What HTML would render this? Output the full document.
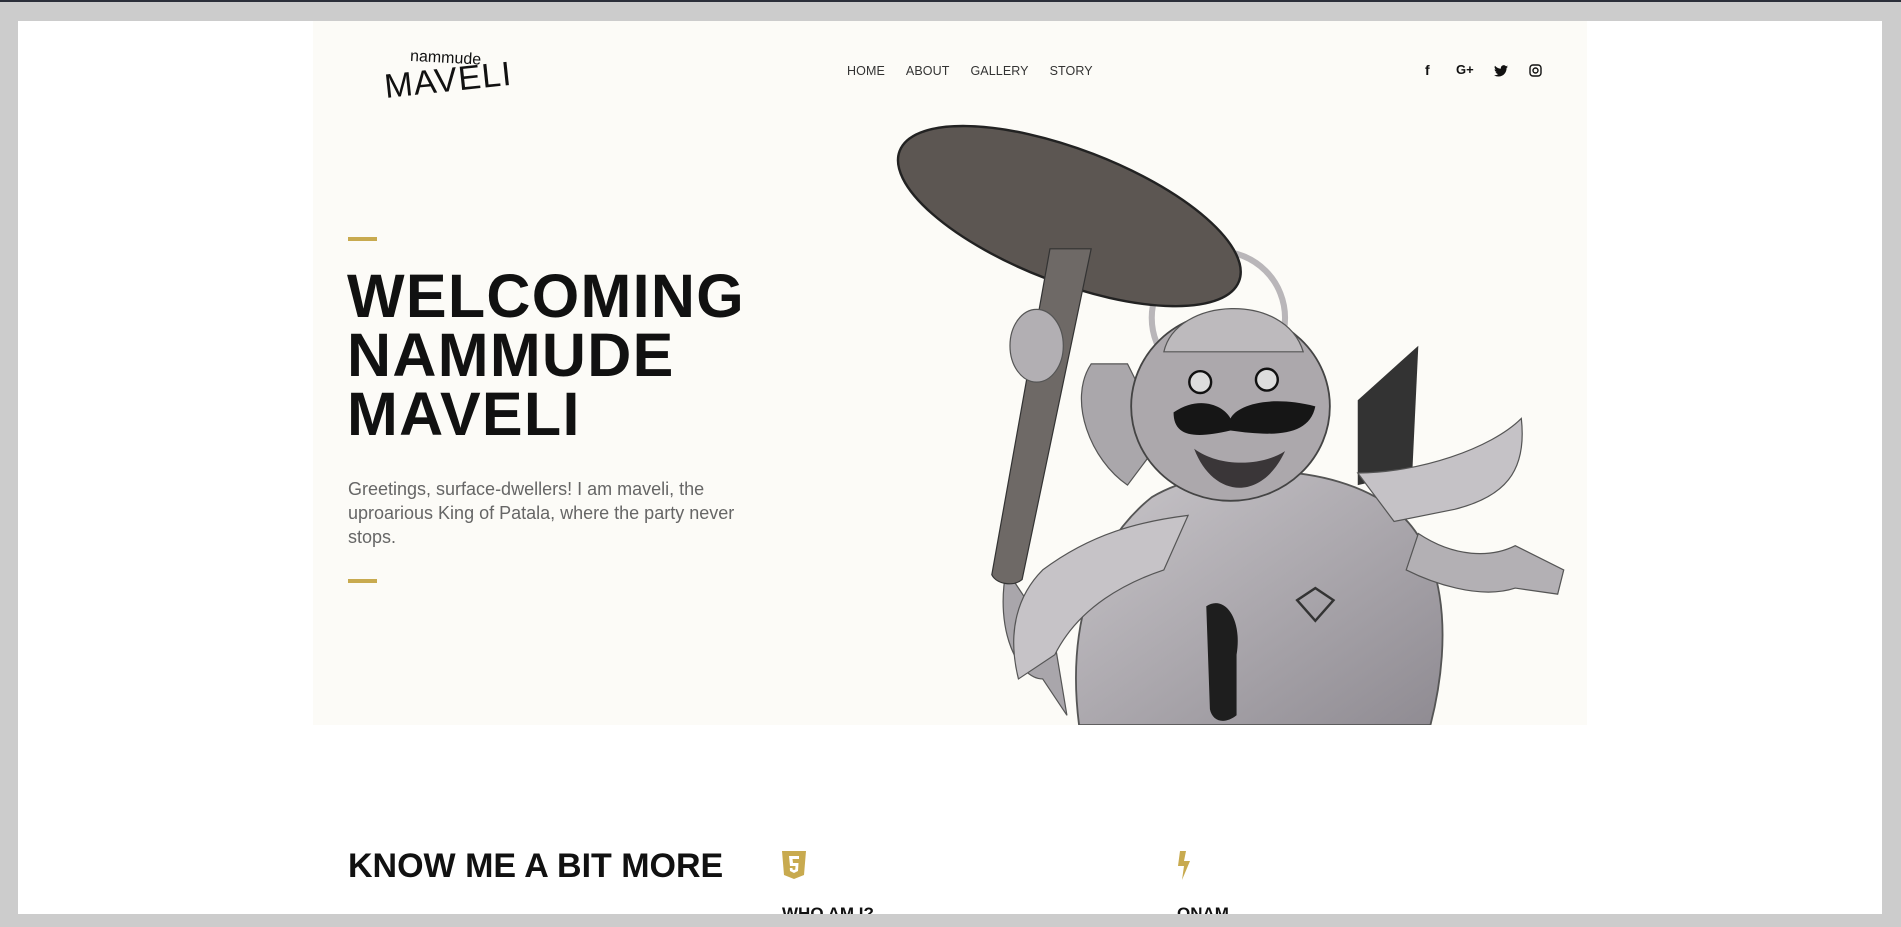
<!DOCTYPE html>
<html><head><meta charset="utf-8"><style>
*{margin:0;padding:0;box-sizing:border-box}
html,body{width:1901px;height:927px;overflow:hidden;background:#cccccc;font-family:"Liberation Sans",sans-serif}
.topline{position:absolute;left:0;top:0;width:1901px;height:2px;background:#2b2f3a}
.white{position:absolute;left:18px;top:21px;width:1864px;height:893px;background:#fff}
.hero{position:absolute;left:313px;top:21px;width:1274px;height:704px;background:#fcfbf7}
.logo{position:absolute;left:382px;top:46px}
.nav{position:absolute;top:64px;left:847px;font-size:12.5px;color:#333;letter-spacing:.1px}
.nav span{margin-right:21px}
.soc{position:absolute;top:62px;font-size:14px;color:#111;font-weight:bold}
.bar{position:absolute;left:348px;width:29px;height:4px;background:#c8aa4f}
h1{position:absolute;left:347px;top:267px;font-size:61px;line-height:59px;font-weight:bold;color:#111;letter-spacing:1.3px}
.p{position:absolute;left:348px;top:477px;width:400px;font-size:18px;line-height:24px;color:#666}
h2{position:absolute;left:348px;top:847px;font-size:34px;font-weight:bold;color:#111;letter-spacing:0}
h3{position:absolute;top:904px;font-size:17px;font-weight:bold;color:#111}
</style></head><body>
<div class="topline"></div>
<div class="white"></div>
<div class="hero"></div>
<svg class="logo" width="130" height="56" viewBox="0 0 130 56">
<text x="28" y="16" font-family="Liberation Sans" font-size="16" fill="#111" transform="rotate(3 50 12)">nammude</text>
<text x="2" y="46" font-family="Liberation Sans" font-size="34" fill="#111" transform="rotate(-6 60 34)" letter-spacing="1">MAVELI</text>
</svg>
<div class="nav"><span>HOME</span><span>ABOUT</span><span>GALLERY</span><span>STORY</span></div>
<div class="soc" style="left:1425px">f</div>
<div class="soc" style="left:1456px;font-size:13px">G+</div>
<svg style="position:absolute;left:1494px;top:65px" width="14" height="12" viewBox="0 0 24 20"><path d="M24 2.4c-.9.4-1.8.7-2.8.8 1-.6 1.8-1.6 2.2-2.7-1 .6-2 1-3.1 1.2A4.9 4.9 0 0 0 11.9 6 14 14 0 0 1 1.7.9a4.9 4.9 0 0 0 1.5 6.6c-.8 0-1.6-.3-2.2-.6 0 2.4 1.700 4.4 3.9 4.8-.7.2-1.5.2-2.2.1.6 2 2.4 3.4 4.6 3.4A9.9 9.9 0 0 1 0 17.3 14 14 0 0 0 7.5 19.5c9.1 0 14-7.5 14-14v-.6c1-.7 1.8-1.6 2.5-2.5z" fill="#111"/></svg>
<svg style="position:absolute;left:1529px;top:64px" width="13" height="13" viewBox="0 0 13 13"><rect x="1" y="1" width="11" height="11" rx="3" fill="none" stroke="#111" stroke-width="1.4"/><circle cx="6.5" cy="6.5" r="2.5" fill="none" stroke="#111" stroke-width="1.4"/></svg>

<svg style="position:absolute;left:313px;top:21px" width="1274" height="704" viewBox="258 17 1051 581">
<defs>
<linearGradient id="b" x1="0" y1="0" x2="1" y2="1"><stop offset="0" stop-color="#c9c6ca"/><stop offset="1" stop-color="#8f8b92"/></linearGradient>
</defs>
<path d="M1120 330 L1170 285 L1165 390 L1120 400Z" fill="#333"/>
<path d="M830 470 C820 520 840 560 860 560 L880 590 L870 530 Z" fill="#a9a6ab" stroke="#555"/>
<path d="M900 300 C880 330 900 380 930 400 L960 360 L930 300Z" fill="#aaa7ab" stroke="#555"/>
<path d="M890 598 C880 520 900 450 950 410 C1000 380 1100 380 1150 420 C1190 450 1200 520 1180 598Z" fill="url(#b)" stroke="#555" stroke-width="1.5"/>
<path d="M1120 390 C1170 390 1230 370 1255 345 C1260 390 1240 410 1200 420 L1150 430Z" fill="#c5c2c6" stroke="#555"/>
<path d="M1170 440 C1200 460 1230 460 1250 450 L1290 470 L1285 490 L1250 485 C1220 495 1180 480 1160 470Z" fill="#b3b0b4" stroke="#555"/>
<path d="M860 470 C900 440 940 430 980 425 L960 470 C930 480 890 500 870 540 L840 560 C830 520 840 490 860 470Z" fill="#c6c3c7" stroke="#555"/>
<circle cx="1005" cy="262" r="55" fill="none" stroke="#b9b6b9" stroke-width="5"/>
<ellipse cx="1015" cy="335" rx="82" ry="78" fill="#aca8ac" stroke="#444" stroke-width="1.5"/>
<path d="M960 290 C970 245 1060 240 1075 290Z" fill="#bdbabd" stroke="#555"/>
<path d="M968 340 C990 325 1010 335 1015 345 C1020 335 1045 325 1085 335 C1080 360 1050 360 1015 355 C985 362 968 360 968 340Z" fill="#161616"/>
<path d="M985 370 C1000 410 1040 415 1060 372 C1040 385 1005 385 985 370Z" fill="#3a3638"/>
<circle cx="990" cy="315" r="9" fill="#ddd" stroke="#111" stroke-width="2"/>
<circle cx="1045" cy="313" r="9" fill="#ddd" stroke="#111" stroke-width="2"/>
<ellipse cx="882" cy="178" rx="150" ry="55" transform="rotate(21 882 178)" fill="#5c5652" stroke="#222" stroke-width="2"/>
<path d="M866 205 L900 205 L843 478 C836 484 822 482 818 474Z" fill="#6e6966" stroke="#333"/>
<ellipse cx="855" cy="285" rx="22" ry="30" fill="#b2afb3" stroke="#555"/>
<path d="M995 500 C1010 490 1025 510 1020 540 L1020 590 C1010 598 1000 595 998 585Z" fill="#1e1e1e"/>
<path d="M1070 495 L1085 485 L1100 495 L1085 512Z" fill="none" stroke="#333" stroke-width="2"/>
</svg>

<div class="bar" style="top:237px"></div>
<h1>WELCOMING<br>NAMMUDE<br>MAVELI</h1>
<div class="p">Greetings, surface-dwellers! I am maveli, the uproarious King of Patala, where the party never stops.</div>
<div class="bar" style="top:579px"></div>

<h2>KNOW ME A BIT MORE</h2>
<svg style="position:absolute;left:782px;top:851px" width="24" height="28" viewBox="0 0 24 28"><path d="M0 0H24L22 24L12 28L2 24Z" fill="#c8aa4f"/><path d="M7 5H17V8H10.5L11 12H16.5L16 20L12 22L8 20L7.8 17H10.5L10.6 18.5L12 19L13.3 18.5L13.5 15H8Z" fill="#fff"/></svg>
<svg style="position:absolute;left:1177px;top:851px" width="16" height="29" viewBox="0 0 16 29"><path d="M3 0L9 0L7 10L13 10L5 29L7 15L1 15Z" fill="#c8aa4f"/></svg>
<h3 style="left:782px">WHO AM I?</h3>
<h3 style="left:1177px">ONAM</h3>
<div style="position:absolute;left:0;top:914px;width:1901px;height:13px;background:#cccccc"></div>
</body></html>
